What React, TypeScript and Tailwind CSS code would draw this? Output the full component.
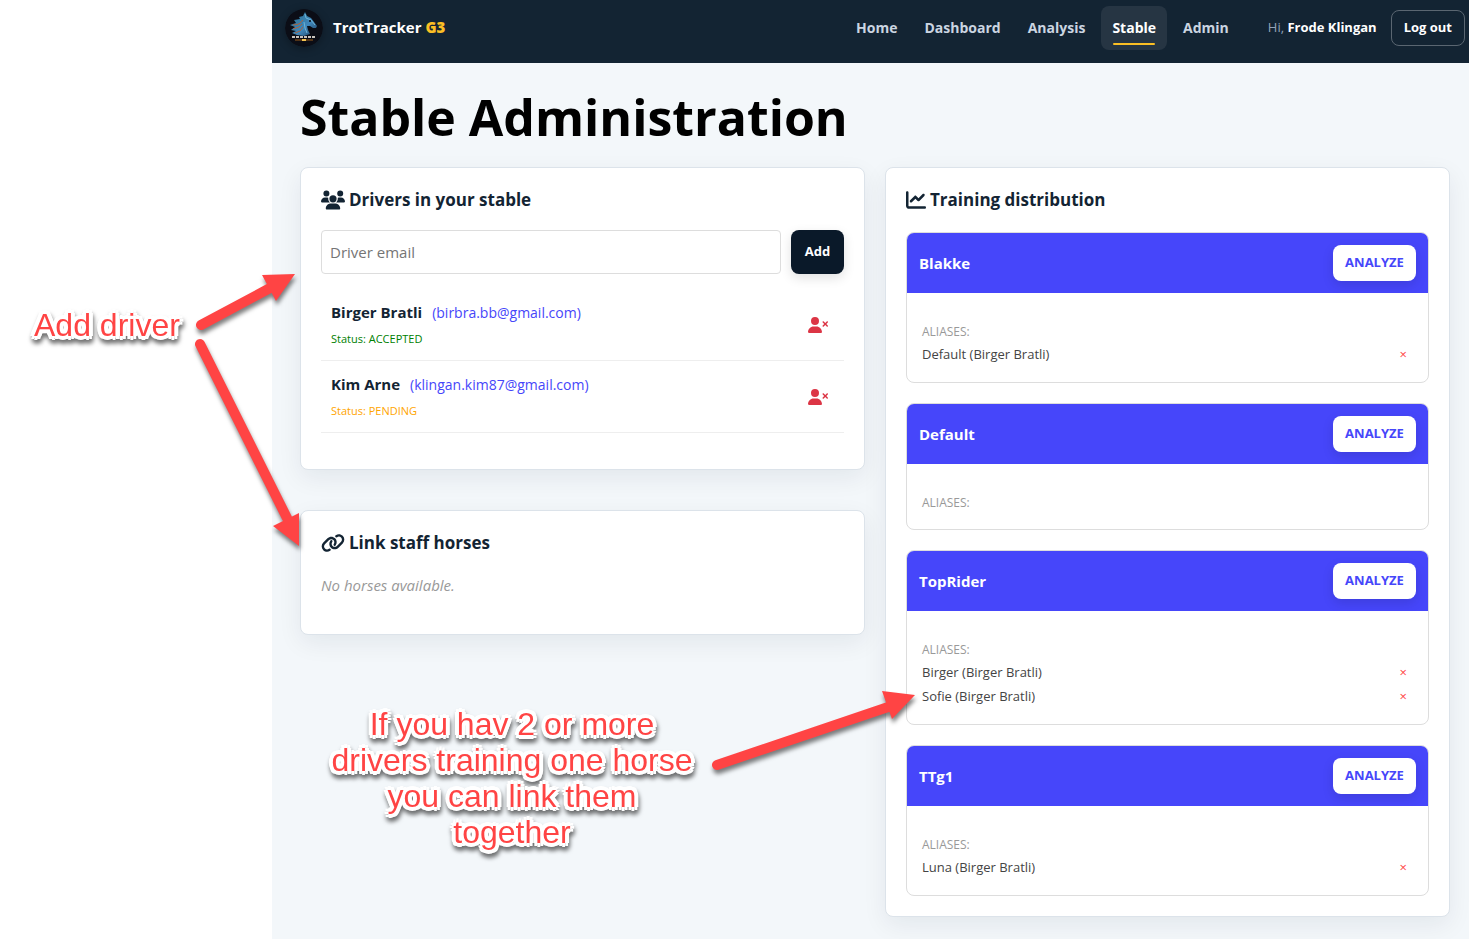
import { useState } from "react";
import { FaChartLine, FaLink, FaUsers, FaUserXmark } from "react-icons/fa6";

const navItems = ["Home", "Dashboard", "Analysis", "Stable", "Admin"];

const drivers = [
  { name: "Birger Bratli", email: "birbra.bb@gmail.com", status: "ACCEPTED" },
  { name: "Kim Arne", email: "klingan.kim87@gmail.com", status: "PENDING" },
];

const horses = [
  { name: "Blakke", aliases: ["Default (Birger Bratli)"] },
  { name: "Default", aliases: [] },
  { name: "TopRider", aliases: ["Birger (Birger Bratli)", "Sofie (Birger Bratli)"] },
  { name: "TTg1", aliases: ["Luna (Birger Bratli)"] },
];

const cardClass =
  "rounded-lg border border-[#dce3ea] bg-white p-5 shadow-[0_8px_24px_rgba(15,35,50,0.07)]";

// white halo is built from shadows so that the corners stay round
const noteClass =
  "absolute text-center text-[32px] leading-9 text-[#ff4444] font-['Liberation_Sans',Arial,sans-serif] [text-shadow:4px_0_white,-4px_0_white,0_4px_white,0_-4px_white,3px_3px_white,-3px_3px_white,3px_-3px_white,-3px_-3px_white,2px_0_white,-2px_0_white,0_2px_white,0_-2px_white] drop-shadow-[1px_4px_2px_rgba(0,0,0,0.55)]";

function Logo() {
  return (
    <svg viewBox="0 0 38 38" className="size-[38px] rounded-full shadow-[0_2px_8px_rgba(0,0,0,0.3)]" aria-hidden="true">
      <defs>
        <linearGradient id="mane" x1="0" y1="0" x2="1" y2="1">
          <stop offset="0" stopColor="#2b6f8c" />
          <stop offset="0.6" stopColor="#3f86ba" />
          <stop offset="1" stopColor="#1d3b5c" />
        </linearGradient>
      </defs>
      <circle cx="19" cy="19" r="19" fill="#0b0d16" />
      <path
        d="M20 3L22 7L26 9L29 13L32 17L31 19L28 19L25 17L22 17L23 21L25 25L19 27L12 26L7 24L11 22L6 21L10 18L5 16L11 14L9 11L15 10L14 8L18 7Z"
        fill="url(#mane)"
      />
      <path d="M8 16L14 15L18 11M8 20L14 18L17 15M10 24L15 22L18 18" stroke="#a8623f" strokeWidth="1" fill="none" />
      <path d="M20 5L21 9L26 11L30 16M19 13L20 19L22 24" stroke="#6db4d8" strokeWidth="1" fill="none" />
      <circle cx="25" cy="12" r="1" fill="#0b0d16" />
      <path d="M7 28h24" stroke="#c9c3bd" strokeWidth="2" strokeDasharray="3 1" />
      <path d="M10 31h18" stroke="#9a5c1a" strokeWidth="1" />
      <path d="M17 31h4" stroke="#f5c451" strokeWidth="2" />
    </svg>
  );
}

function Header() {
  return (
    <header className="flex h-[63px] items-center justify-between bg-[#132433] pr-1 pb-2 pl-[13px]">
      <a href="#" className="flex items-center gap-[10px] text-[15px] font-bold text-white">
        <Logo />
        <span>
          TrotTracker <span className="font-extrabold text-[#fbbf24]">G3</span>
        </span>
      </a>
      <div className="flex items-center">
        <nav className="flex gap-[5px]">
          {navItems.map((item) => (
            <a
              key={item}
              href="#"
              className={
                item === "Stable"
                  ? "relative flex h-11 items-center rounded-lg bg-[#263543] px-[11px] text-sm font-bold text-white"
                  : "flex h-11 items-center px-[11px] text-sm font-bold text-[#cbd5e1]"
              }
            >
              {item}
              {item === "Stable" && (
                <span className="absolute inset-x-3 bottom-[5px] h-[2px] rounded-full bg-[#fbbf24]" />
              )}
            </a>
          ))}
        </nav>
        <p className="ml-7 text-[13px] text-[#94a3b8]">
          Hi, <strong className="font-bold text-white">Frode Klingan</strong>
        </p>
        <button className="ml-[14px] h-9 rounded-lg border border-[#5a6671] px-3 text-[13px] font-bold text-white">
          Log out
        </button>
      </div>
    </header>
  );
}

function DriversCard() {
  const [email, setEmail] = useState("");

  return (
    <section className={cardClass}>
      <h2 className="flex h-6 items-center gap-1 text-[17px] font-bold text-[#132433]">
        <FaUsers className="size-6" />
        Drivers in your stable
      </h2>
      <form className="mt-[18px] flex gap-[10px]" onSubmit={(e) => e.preventDefault()}>
        <input
          type="email"
          aria-label="Driver email"
          placeholder="Driver email"
          value={email}
          onChange={(e) => setEmail(e.target.value)}
          className="h-11 min-w-0 flex-1 rounded border border-[#dddddd] px-2 text-[15px] text-[#132433] outline-none placeholder:text-[#757575]"
        />
        <button className="h-11 w-[53px] rounded-lg bg-[#0a1929] text-[13px] font-bold text-white shadow-[0_4px_12px_rgba(0,0,0,0.12)]">
          Add
        </button>
      </form>
      <ul className="mt-[15px] mb-4">
        {drivers.map((driver) => (
          <li key={driver.email} className="flex h-[72px] items-center justify-between border-b border-[#eeeeee] pr-4 pl-[10px]">
            <div>
              <p className="flex items-baseline gap-[10px] leading-7">
                <strong className="text-[15px] font-bold text-[#132433]">{driver.name}</strong>
                <span className="text-sm leading-7 text-[#4646fa]">({driver.email})</span>
              </p>
              <p
                className={
                  driver.status === "ACCEPTED"
                    ? "text-[11px] leading-6 text-[#008000]"
                    : "text-[11px] leading-6 text-[#ffa500]"
                }
              >
                Status: {driver.status}
              </p>
            </div>
            <button aria-label={`Remove ${driver.name}`} className="text-[#dc3545]">
              <FaUserXmark className="h-4 w-5" />
            </button>
          </li>
        ))}
      </ul>
    </section>
  );
}

function HorseBox({ name, aliases }: { name: string; aliases: string[] }) {
  return (
    <article className="overflow-hidden rounded-lg border border-[#dddddd]">
      <div className="flex h-[60px] items-center justify-between bg-[#4646fa] px-3">
        <h3 className="text-[15px] font-bold text-white">{name}</h3>
        <button className="h-9 w-[83px] rounded-lg bg-white text-[13px] font-bold text-[#4646fa] shadow-[0_4px_12px_rgba(0,0,0,0.12)]">
          ANALYZE
        </button>
      </div>
      <div className="px-[15px] pt-7 pb-[15px]">
        <p className="text-xs leading-[22px] text-[#999999]">ALIASES:</p>
        <ul>
          {aliases.map((alias) => (
            <li key={alias} className="flex h-6 items-center justify-between pr-[6px] text-[13px] text-[#444444]">
              {alias}
              <button aria-label={`Unlink ${alias}`} className="text-[13px] text-[#ff4444]">
                ×
              </button>
            </li>
          ))}
        </ul>
      </div>
    </article>
  );
}

// Red help arrows drawn on top of the page
function Arrows() {
  return (
    <svg
      className="pointer-events-none absolute top-0 left-0 drop-shadow-[1px_4px_2px_rgba(0,0,0,0.5)]"
      width="940"
      height="800"
      aria-hidden="true"
    >
      <g stroke="#ff4444" strokeWidth="10" strokeLinecap="round">
        <path d="M201 325L272 287" />
        <path d="M200 344L287 518" />
        <path d="M717 765L897 704" />
      </g>
      <g fill="#ff4444">
        <path d="M295 274L262 275L276 301Z" />
        <path d="M299 546L299 513L273 526Z" />
        <path d="M915 695L882 691L892 719Z" />
      </g>
    </svg>
  );
}

export default function App() {
  return (
    <div className="relative flex min-h-screen bg-white font-['Open_Sans','Noto_Sans',sans-serif]">
      <aside className="w-[272px] shrink-0" />
      <div className="min-w-0 flex-1 bg-[#f3f7fa]">
        <Header />
        <main className="pt-4 pr-[19px] pb-[22px] pl-7">
          <h1 className="text-[50px] leading-[76px] font-bold text-black">Stable Administration</h1>
          <div className="mt-3 grid grid-cols-2 items-start gap-5">
            <div className="flex flex-col gap-10">
              <DriversCard />
              <section className={cardClass}>
                <h2 className="flex h-6 items-center gap-1 text-[17px] font-bold text-[#132433]">
                  <FaLink className="size-6" />
                  Link staff horses
                </h2>
                <p className="mt-[18px] mb-4 text-[15px] leading-[25px] text-[#999999] italic">No horses available.</p>
              </section>
            </div>
            <section className={cardClass}>
              <h2 className="flex h-6 items-center gap-1 text-[17px] font-bold text-[#132433]">
                <FaChartLine className="size-5" />
                Training distribution
              </h2>
              <div className="mt-5 flex flex-col gap-5">
                {horses.map((horse) => (
                  <HorseBox key={horse.name} name={horse.name} aliases={horse.aliases} />
                ))}
              </div>
            </section>
          </div>
        </main>
      </div>

      <Arrows />
      <p className={`${noteClass} top-[307px] left-[34px]`}>Add driver</p>
      <p className={`${noteClass} top-[706px] left-[331px] w-[362px]`}>
        If you hav 2 or more
        <br />
        drivers training one horse
        <br />
        you can link them
        <br />
        together
      </p>
    </div>
  );
}
